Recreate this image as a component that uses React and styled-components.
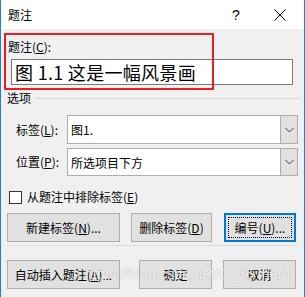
import React from 'react'
import styled, { createGlobalStyle } from 'styled-components'

const GlobalStyle = createGlobalStyle`
  html, body {
    margin: 0;
    padding: 0;
    background: #ffffff;
  }
  * {
    box-sizing: border-box;
  }
`

const ui = `"Noto Sans CJK SC", "Liberation Sans", sans-serif`

// window frame
const Window = styled.div`
  position: relative;
  width: 305px;
  height: 297px;
  display: flex;
  flex-direction: column;
  border-left: 1px solid #1e7fd8;
  border-right: 1px solid #1e7fd8;
  font-family: ${ui};
  font-size: 12px;
  color: #000;
  overflow: hidden;
`

const TitleBar = styled.div`
  height: 29px;
  display: flex;
  align-items: center;
  background: #fff;
  padding-left: 7px;
  flex-shrink: 0;
`

const Title = styled.div`
  flex: 1;
  font-size: 12px;
  line-height: 16px;
  padding-top: 1px;
`

const TitleButton = styled.div`
  width: ${props => props.w}px;
  display: flex;
  justify-content: center;
  align-items: center;
  font-family: "Liberation Sans", sans-serif;
  font-size: 14px;
`

const Body = styled.div`
  position: relative;
  flex: 1;
  background: #f0f0f0;
  padding: 10px 7px 0 6px;
  display: flex;
  flex-direction: column;
`

const Annotation = styled.div`
  position: absolute;
  left: 3px;
  top: 4px;
  width: 210px;
  height: 57px;
  border: 2px solid #ed1c24;
  pointer-events: none;
`

const Label = styled.div`
  line-height: 16px;
  padding-left: ${props => props.indent || 0}px;
  white-space: nowrap;
`

const CaptionInput = styled.div`
  margin: 4px 4px 0 4px;
  height: 26px;
  border: 1px solid #7a7a7a;
  background: #fff;
  display: flex;
  align-items: center;
  padding-left: 3px;
  font-size: 18px;
  letter-spacing: 0.3px;
  white-space: nowrap;
`

const GroupHeader = styled.div`
  margin-top: 5px;
  display: flex;
  align-items: center;
  gap: 4px;
  line-height: 16px;
`

const GroupLine = styled.div`
  flex: 1;
  height: 1px;
  background: #dcdcdc;
  margin-right: -3px;
`

const FieldRow = styled.div`
  display: flex;
  align-items: center;
  margin-top: ${props => props.mt}px;
  padding-left: 9px;
`

const FieldLabel = styled.div`
  width: 51px;
  line-height: 16px;
`

const Select = styled.div`
  flex: 1;
  margin-right: -1px;
  height: ${props => props.h}px;
  display: flex;
  border: 1px solid #adadad;
  background: #fff;
`

const SelectValue = styled.div`
  flex: 1;
  display: flex;
  align-items: center;
  padding-left: 3px;
  font-size: 12px;
`

const SelectArrow = styled.div`
  width: 17px;
  background: #e1e1e1;
  border-left: 1px solid #adadad;
  display: flex;
  align-items: center;
  justify-content: center;
`

const CheckRow = styled.div`
  display: flex;
  align-items: center;
  gap: 5px;
  margin-top: 13px;
  padding-left: 2px;
  line-height: 16px;
`

const CheckBox = styled.div`
  width: 13px;
  height: 13px;
  border: 1px solid #333;
  background: #fff;
`

const ButtonRow = styled.div`
  display: flex;
  margin-top: ${props => props.mt}px;
`

const Button = styled.div`
  width: ${props => props.w}px;
  height: 29px;
  margin-left: ${props => props.ml || 0}px;
  background: #e1e1e1;
  border: ${props => (props.focused ? '2px solid #0078d7' : '1px solid #adadad')};
  display: flex;
  align-items: center;
  justify-content: center;
  padding: ${props => (props.focused ? '2px' : '0')};
  white-space: nowrap;
`

const FocusRing = styled.div`
  width: 100%;
  height: 100%;
  border: 1px dotted #000;
  display: flex;
  align-items: center;
  justify-content: center;
`

const Separator = styled.div`
  height: 1px;
  background: #dadada;
  margin-top: 3px;
`

const Watermark = styled.div`
  position: absolute;
  left: 84px;
  top: 266px;
  font-family: "Liberation Sans", sans-serif;
  font-size: 14px;
  color: rgba(255, 255, 255, 0.85);
  text-shadow: 0 0 1px rgba(120, 120, 120, 0.6);
  letter-spacing: 0.2px;
  pointer-events: none;
  white-space: nowrap;
`

const U = styled.span`
  text-decoration: underline;
  text-underline-offset: 1px;
`

function Chevron() {
  return (
    <svg width="9" height="6" viewBox="0 0 9 6">
      <path d="M0.5 1 L4.5 5 L8.5 1" fill="none" stroke="#444" strokeWidth="1" />
    </svg>
  )
}

function CloseIcon() {
  return (
    <svg width="12" height="12" viewBox="0 0 12 12">
      <path d="M0.5 0.5 L11.5 11.5 M11.5 0.5 L0.5 11.5" stroke="#000" strokeWidth="1" />
    </svg>
  )
}

export default function App() {
  return (
    <>
      <GlobalStyle />
      <Window>
        <TitleBar>
          <Title>题注</Title>
          <TitleButton w={16}>?</TitleButton>
          <TitleButton w={28} />
          <TitleButton w={16}><CloseIcon /></TitleButton>
          <TitleButton w={16} />
        </TitleBar>

        <Body>
          <Label indent={1}>题注(<U>C</U>):</Label>
          <CaptionInput>图 1.1 这是一幅风景画</CaptionInput>

          {/* options */}
          <GroupHeader>
            <Label>选项</Label>
            <GroupLine />
          </GroupHeader>

          <FieldRow mt={9}>
            <FieldLabel>标签(<U>L</U>):</FieldLabel>
            <Select h={29}>
              <SelectValue>图1.</SelectValue>
              <SelectArrow><Chevron /></SelectArrow>
            </Select>
          </FieldRow>
          <FieldRow mt={4}>
            <FieldLabel>位置(<U>P</U>):</FieldLabel>
            <Select h={28}>
              <SelectValue>所选项目下方</SelectValue>
              <SelectArrow><Chevron /></SelectArrow>
            </Select>
          </FieldRow>

          <CheckRow>
            <CheckBox />
            <span>从题注中排除标签(<U>E</U>)</span>
          </CheckRow>

          <ButtonRow mt={8}>
            <Button w={113}>新建标签(<U>N</U>)...</Button>
            <Button w={81} ml={11}>删除标签(<U>D</U>)</Button>
            <Button w={72} ml={12} focused>
              <FocusRing>编号(<U>U</U>)...</FocusRing>
            </Button>
          </ButtonRow>

          <Separator />

          <ButtonRow mt={14}>
            <Button w={113}>自动插入题注(<U>A</U>)...</Button>
            <Button w={73} ml={19}>确定</Button>
            <Button w={73} ml={11}>取消</Button>
          </ButtonRow>

          <Annotation />
        </Body>

        <Watermark>https://blog.csdn.net/G_66_hero</Watermark>
      </Window>
    </>
  )
}
